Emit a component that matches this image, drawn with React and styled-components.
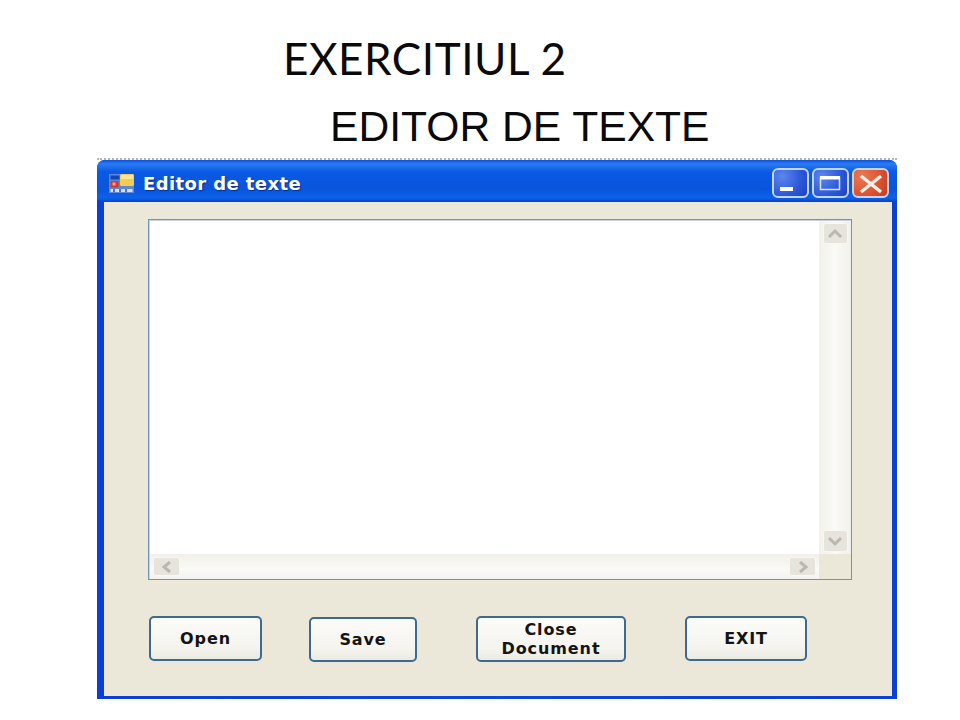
import React from 'react';
import styled, { createGlobalStyle } from 'styled-components';

const Global = createGlobalStyle`
  html, body { margin: 0; padding: 0; background: #fff; }
  #root { width: 960px; height: 720px; overflow: hidden; }
`;

const Page = styled.div`
  width: 960px;
  height: 720px;
  background: #fff;
  display: flex;
  flex-direction: column;
  padding-left: 97px;
  box-sizing: border-box;
`;

const Heading = styled.h1`
  margin: 0;
  height: 92px;
  padding: 32px 0 0 186px;
  box-sizing: border-box;
  font: 400 44px/52px Lato, "Liberation Sans", sans-serif;
  letter-spacing: 0.55px;
  color: #0a0a0a;
  white-space: nowrap;
`;

const SubHeading = styled.h2`
  margin: 0;
  height: 66px;
  padding: 9px 0 0 233px;
  box-sizing: border-box;
  font: 400 42.6px/50px "Liberation Sans", sans-serif;
  color: #0a0a0a;
  white-space: nowrap;
`;

const DottedRule = styled.div`
  width: 800px;
  height: 0;
  border-top: 2px dotted #b5b5b5;
`;

const Window = styled.div`
  width: 800px;
  height: 539px;
  display: flex;
  flex-direction: column;
  border-radius: 8px 8px 0 0;
  background: linear-gradient(90deg, #0a3fd8 0%, #0a48e0 50%, #0a3fd8 100%);
  overflow: hidden;
`;

const TitleBar = styled.div`
  height: 42px;
  flex: none;
  box-sizing: border-box;
  display: flex;
  align-items: center;
  padding: 4px 8px 0 12px;
  background: linear-gradient(180deg, #0b4fdc 0%, #2a7cf2 9%, #0a5ae4 28%, #0a55dc 70%, #0c62ea 90%, #0a3fc8 100%);
`;

const AppIcon = styled.svg`
  width: 25px;
  height: 19px;
  flex: none;
`;

const TitleText = styled.span`
  margin: 2px 0 0 9px;
  font: 700 18px/24px "DejaVu Sans", sans-serif;
  letter-spacing: 0.4px;
  color: #fff;
  text-shadow: 1px 1px 1px #0a2d90;
  flex: 1;
`;

const Controls = styled.div`
  display: flex;
  gap: 3px;
`;

const ControlButton = styled.div`
  width: 37px;
  height: 30px;
  box-sizing: border-box;
  border: 2px solid #c4d4f6;
  border-radius: 6px;
  background: ${p => p.$close
    ? 'radial-gradient(circle at 25% 25%, #ea7a52, #dc5230 60%, #c23c1a)'
    : 'radial-gradient(circle at 25% 25%, #5c86ee, #2c58da 60%, #1c40c4)'};
  display: flex;
`;

const ControlGlyph = styled.svg`
  width: 33px;
  height: 26px;
`;

const Frame = styled.div`
  flex: 1;
  margin: 0 5px 3px 7px;
  background: #ebe7d9;
  padding: 17px 40px 0 44px;
  min-height: 0;
`;

const TextBox = styled.div`
  width: 704px;
  height: 361px;
  box-sizing: border-box;
  border: 1px solid #6f93bb;
  box-shadow: inset 1px 1px 0 #c5d3e4;
  background: #fff;
  padding: 1px 0 0 1px;
  display: grid;
  grid-template-columns: 1fr 32px;
  grid-template-rows: 1fr 25px;
`;

const TextArea = styled.div`
  background: #fff;
`;

const VTrack = styled.div`
  background: linear-gradient(90deg, #f2f1ea, #fafaf6 50%, #f1f0ea);
  display: flex;
  flex-direction: column;
  justify-content: space-between;
  align-items: center;
  padding: 2px 0 2px;
`;

const HTrack = styled.div`
  background: linear-gradient(180deg, #f1f0e9, #fafaf6 60%, #f3f2ee);
  display: flex;
  justify-content: space-between;
  align-items: center;
  padding: 0 3px 0 3px;
`;

const Corner = styled.div`
  background: #ebe7d9;
`;

const ScrollButton = styled.div`
  width: ${p => p.$w}px;
  height: ${p => p.$h}px;
  box-sizing: border-box;
  border: 1px solid #f8f8f2;
  border-radius: 3px;
  background: #e6e4dc;
  display: flex;
  align-items: center;
  justify-content: center;
`;

const Chevron = styled.svg`
  width: 16px;
  height: 12px;
`;

const ButtonRow = styled.div`
  display: flex;
  align-items: flex-start;
  margin-top: 36px;
  margin-left: 1px;
`;

const PushButton = styled.div`
  width: ${p => p.$w}px;
  height: ${p => p.$h || 45}px;
  margin-left: ${p => p.$gap || 0}px;
  margin-top: ${p => p.$top || 0}px;
  box-sizing: border-box;
  flex: none;
  border: 2px solid #3d6a90;
  border-radius: 5px;
  background: linear-gradient(180deg, #fbfbf8 0%, #f5f4ef 70%, #ecebe2 100%);
  display: flex;
  align-items: center;
  justify-content: center;
  text-align: center;
  font: 700 16px/19px "DejaVu Sans", sans-serif;
  letter-spacing: 0.9px;
  color: #141414;
`;

function Arrow({ d }) {
  return (
    <Chevron viewBox="0 0 16 12">
      <path d={d} fill="none" stroke="#b9b8ae" strokeWidth="3" />
    </Chevron>
  );
}

export default function App() {
  return (
    <Page>
      <Global />
      <Heading>EXERCITIUL 2</Heading>
      <SubHeading>EDITOR DE TEXTE</SubHeading>
      <DottedRule />
      <Window>
        <TitleBar>
          <AppIcon viewBox="0 0 25 19">
            <rect x="0" y="0" width="25" height="19" fill="#5f86d8" />
            <rect x="1.5" y="1.5" width="9" height="4" fill="#0f47b8" />
            <rect x="1.5" y="7" width="8" height="6.5" fill="#d8382a" />
            <rect x="3.5" y="8.5" width="3" height="3" fill="#f4a2a0" />
            <rect x="11" y="0" width="14" height="12" rx="1.5" fill="#f3cc52" />
            <rect x="12" y="1" width="12" height="4" fill="#fae49a" />
            <rect x="1.5" y="15" width="22" height="3" fill="#d6e0f2" />
            <path d="M5 15v3M11 15v3M17 15v3" stroke="#1c50b8" strokeWidth="1.5" />
          </AppIcon>
          <TitleText>Editor de texte</TitleText>
          <Controls>
            <ControlButton>
              <ControlGlyph viewBox="0 0 33 26">
                <rect x="6" y="17" width="13" height="4" fill="#fff" />
              </ControlGlyph>
            </ControlButton>
            <ControlButton>
              <ControlGlyph viewBox="0 0 33 26">
                <rect x="6.5" y="7.5" width="19" height="12" fill="none" stroke="#dbe6fb" strokeWidth="1.5" />
                <rect x="6" y="6" width="20" height="3.5" fill="#fff" />
              </ControlGlyph>
            </ControlButton>
            <ControlButton $close>
              <ControlGlyph viewBox="0 0 33 26">
                <path d="M7 6 L27 22 M27 6 L7 22" stroke="#f8efe8" strokeWidth="3.5" />
              </ControlGlyph>
            </ControlButton>
          </Controls>
        </TitleBar>
        <Frame>
          <TextBox>
            <TextArea />
            <VTrack>
              <ScrollButton $w={25} $h={21}><Arrow d="M2 9 L8 3 L14 9" /></ScrollButton>
              <ScrollButton $w={25} $h={22}><Arrow d="M2 3 L8 9 L14 3" /></ScrollButton>
            </VTrack>
            <HTrack>
              <ScrollButton $w={27} $h={19}><Arrow d="M11 1 L5 6 L11 11" /></ScrollButton>
              <ScrollButton $w={27} $h={19}><Arrow d="M5 1 L11 6 L5 11" /></ScrollButton>
            </HTrack>
            <Corner />
          </TextBox>
          <ButtonRow>
            <PushButton $w={113}>Open</PushButton>
            <PushButton $w={108} $gap={47} $top={1}>Save</PushButton>
            <PushButton $w={150} $gap={59} $h={46}>Close<br />Document</PushButton>
            <PushButton $w={122} $gap={59}>EXIT</PushButton>
          </ButtonRow>
        </Frame>
      </Window>
    </Page>
  );
}
